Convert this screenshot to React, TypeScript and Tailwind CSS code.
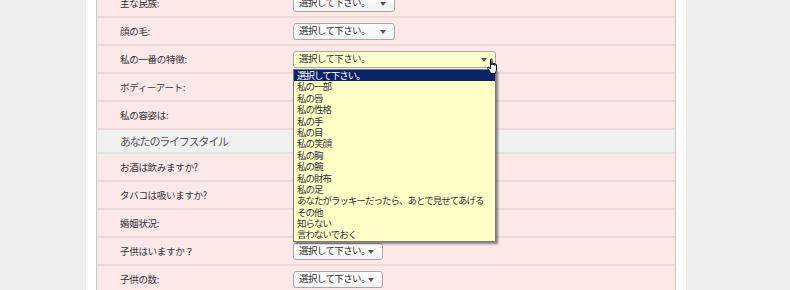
import { ReactNode } from 'react'

const font = { fontFamily: '"Noto Sans CJK JP", "Liberation Sans", sans-serif' }

const options = [
  '選択して下さい。',
  '私の一部',
  '私の唇',
  '私の性格',
  '私の手',
  '私の目',
  '私の笑顔',
  '私の胸',
  '私の腕',
  '私の財布',
  '私の足',
  'あなたがラッキーだったら、あとで見せてあげる',
  'その他',
  '知らない',
  '言わないでおく',
]

function Select({ open = false, short = false }: { open?: boolean; short?: boolean }) {
  const w = open ? 'w-[203px]' : short ? 'w-[90px]' : 'w-[102px]'
  return (
    <div
      className={`relative flex h-[17px] items-center rounded-[3px] border border-[#a9a9a9] pl-[5px] text-[9.5px] tracking-[-0.6px] whitespace-nowrap text-[#333] ${w} ${
        open ? 'bg-[#ffffcc]' : 'bg-gradient-to-b from-white to-[#f2f2f2]'
      }`}
    >
      <span className="leading-none">選択して下さい。</span>
      <span className="absolute right-[8px] top-[6px] h-0 w-0 border-x-[3.5px] border-t-[4px] border-x-transparent border-t-[#555]" />
    </div>
  )
}

function Row({ label, children }: { label: string; children?: ReactNode }) {
  return (
    <div className="flex h-[28px] items-center border-b-2 border-[#ecdada] bg-[#fde8e8]">
      <div className="w-[196px] pl-[23px] text-[9.5px] tracking-[-0.3px] text-[#333]">{label}</div>
      <div>{children}</div>
    </div>
  )
}

function Hand() {
  return (
    <svg width="13" height="17" viewBox="0 0 13 17" className="absolute left-[487px] top-[58px]">
      <path
        d="M3.5 1.5 C3.5 0.7 5 0.7 5 1.5 L5 7 L5 5.5 C5 4.7 6.5 4.7 6.5 5.5 L6.5 7 L6.5 6 C6.5 5.2 8 5.2 8 6 L8 7.5 L8 6.8 C8 6 9.5 6 9.5 6.8 L9.5 11 C9.5 13 8.5 14 8.5 15.5 L3.5 15.5 C3.5 14 1.5 12 0.8 10.5 C0.3 9.5 1.3 8.7 2 9.4 L3.5 11 Z"
        fill="white"
        stroke="black"
        strokeWidth="1"
        strokeLinejoin="round"
      />
    </svg>
  )
}

export default function App() {
  return (
    <div className="relative flex h-[290px] w-[790px] overflow-hidden bg-[#eeeeee]" style={font}>
      <div className="w-[86px] shrink-0" />
      <div className="w-[600px] shrink-0 bg-white px-[10px]">
        <div className="-mt-[10px] border-x border-[#c8c8c8]">
          <Row label="主な民族:">
            <Select />
          </Row>
          <Row label="顔の毛:">
            <Select />
          </Row>
          <Row label="私の一番の特徴:">
            <Select open />
          </Row>
          <Row label="ボディーアート:" />
          <Row label="私の容姿は:" />
          <div className="flex h-[24px] items-center border-b-2 border-[#e2e2e2] bg-[#f0f0f0] pl-[23px] text-[11px] tracking-[-1.2px] text-[#555]">
            あなたのライフスタイル
          </div>
          <Row label="お酒は飲みますか?" />
          <Row label="タバコは吸いますか?" />
          <Row label="婚姻状況:" />
          <Row label="子供はいますか？">
            <Select short />
          </Row>
          <Row label="子供の数:">
            <Select short />
          </Row>
        </div>
      </div>
      <div className="flex-1" />

      <div className="absolute left-[293px] top-[69px] w-[203px] border border-[#7a7a7a] bg-[#ffffc8] text-[9.5px] tracking-[-1px] text-[#333] shadow-[2px_2px_2px_rgba(0,0,0,0.45)]">
        {options.map((o, i) => (
          <div
            key={o}
            className={`h-[11.4px] whitespace-nowrap pl-[3px] leading-[11.4px] ${i === 0 ? 'bg-[#0a246a] text-white' : ''}`}
          >
            {o}
          </div>
        ))}
      </div>
      <Hand />
    </div>
  )
}
